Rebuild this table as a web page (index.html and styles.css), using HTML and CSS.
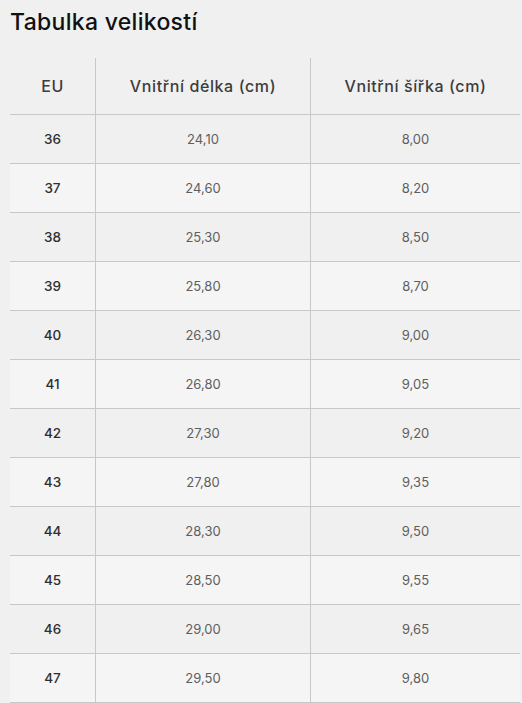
FILE: index.html
```html
<!DOCTYPE html>
<html lang="cs">
<head>
<meta charset="utf-8">
<title>Tabulka velikostí</title>
<link rel="stylesheet" href="styles.css">
</head>
<body>
<div class="page">
  <h2 class="title">Tabulka velikostí</h2>
  <table class="sizes">
    <thead>
      <tr><th class="c1">EU</th><th class="c2">Vnitřní délka (cm)</th><th class="c3">Vnitřní šířka (cm)</th></tr>
    </thead>
    <tbody>
      <tr><td class="eu">36</td><td>24,10</td><td>8,00</td></tr>
      <tr><td class="eu">37</td><td>24,60</td><td>8,20</td></tr>
      <tr><td class="eu">38</td><td>25,30</td><td>8,50</td></tr>
      <tr><td class="eu">39</td><td>25,80</td><td>8,70</td></tr>
      <tr><td class="eu">40</td><td>26,30</td><td>9,00</td></tr>
      <tr><td class="eu">41</td><td>26,80</td><td>9,05</td></tr>
      <tr><td class="eu">42</td><td>27,30</td><td>9,20</td></tr>
      <tr><td class="eu">43</td><td>27,80</td><td>9,35</td></tr>
      <tr><td class="eu">44</td><td>28,30</td><td>9,50</td></tr>
      <tr><td class="eu">45</td><td>28,50</td><td>9,55</td></tr>
      <tr><td class="eu">46</td><td>29,00</td><td>9,65</td></tr>
      <tr><td class="eu">47</td><td>29,50</td><td>9,80</td></tr>
    </tbody>
  </table>
</div>
</body>
</html>
```
FILE: styles.css
```css
html, body {
  margin: 0;
  padding: 0;
  background: #f0f0f0;
}
.page {
  padding: 0 2px 0 10px;
  font-family: Inter, "Noto Sans", sans-serif;
}
.title {
  margin: 0;
  padding-top: 8px;
  height: 58px;
  box-sizing: border-box;
  font-size: 23px;
  font-weight: 500;
  line-height: 28px;
  color: #111;
  letter-spacing: 0.3px;
}
.sizes {
  width: 510px;
  border-collapse: collapse;
  table-layout: fixed;
}
.sizes th {
  height: 56px;
  padding: 0;
  font-size: 16px;
  font-weight: 500;
  letter-spacing: 0.6px;
  color: #3c3c3c;
  text-align: center;
  border-bottom: 1px solid #c8c8c8;
}
.sizes .c1 { width: 85px; }
.sizes .c2 { width: 214px; }
.sizes th + th, .sizes td + td {
  border-left: 1px solid #c8c8c8;
}
.sizes td {
  height: 48px;
  padding: 0;
  text-align: center;
  font-size: 13px;
  font-weight: 400;
  color: #5e5e5e;
  border-bottom: 1px solid #c8c8c8;
}
.sizes td.eu {
  color: #2e2e2e;
  font-weight: 500;
  font-size: 13.5px;
}
.sizes tbody tr:nth-child(even) {
  background: #f5f5f5;
}
```
